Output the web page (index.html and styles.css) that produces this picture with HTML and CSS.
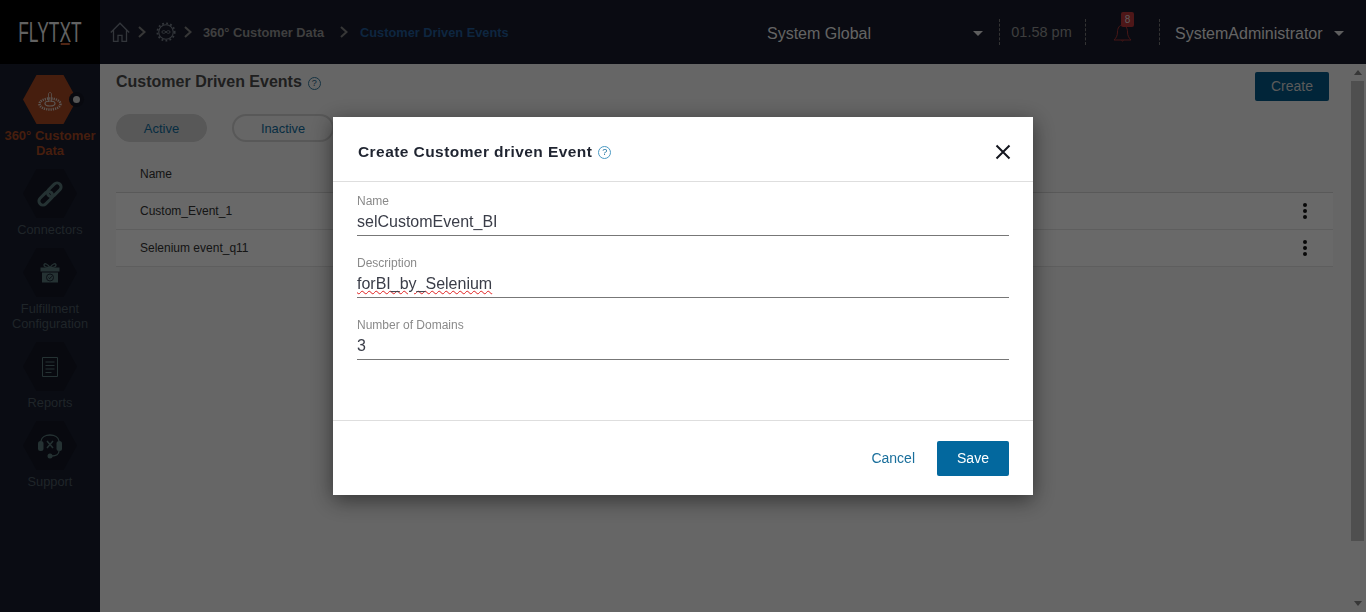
FILE: index.html
```html
<!DOCTYPE html>
<html lang="en">
<head>
<meta charset="utf-8">
<title>Customer Driven Events</title>
<link rel="stylesheet" href="styles.css">
</head>
<body>
<div class="app">
  <header class="topbar">
    <div class="logo"><span class="logo-text">FLYT<span class="logo-x">X</span>T</span></div>
    <nav class="crumbs">
      <svg class="home" viewBox="0 0 20 20"><path d="M.8 10.500 10 1.200l9.200 9.300M3.500 8.200V19.300h4.500v-6h4v6h4.500V8.200" fill="none" stroke="currentColor" stroke-width="1.300"/></svg>
      <svg class="chev" viewBox="0 0 8 12"><path d="M1 1l5.500 5-5.500 5" fill="none" stroke="currentColor" stroke-width="2"/></svg>
      <svg class="gear" viewBox="0 0 22 22"><circle cx="11" cy="11" r="8" fill="none" stroke="currentColor" stroke-width="1.200"/><circle cx="11" cy="11" r="9.500" fill="none" stroke="currentColor" stroke-width="2" stroke-dasharray="2 2.470"/><path d="M11 11c-1.500-2-4.500-2-4.500 0s3 2 4.500 0 4.500-2 4.500 0-3 2-4.500 0z" fill="none" stroke="currentColor"/></svg>
      <svg class="chev" viewBox="0 0 8 12"><path d="M1 1l5.500 5-5.500 5" fill="none" stroke="currentColor" stroke-width="2"/></svg>
      <span class="crumb">360° Customer Data</span>
      <svg class="chev chev-wide" viewBox="0 0 8 12"><path d="M1 1l5.500 5-5.500 5" fill="none" stroke="currentColor" stroke-width="2"/></svg>
      <span class="crumb crumb-active">Customer Driven Events</span>
    </nav>
    <div class="tenant"><span class="top-text">System Global</span><i class="caret"></i></div>
    <div class="time">01.58 pm</div>
    <div class="bell">
      <svg viewBox="0 0 19 20"><path d="M1 17c2-2 3.500-4 3.500-8 0-4 2-7 5-7s5 3 5 7c0 4 1.500 6 3.500 8zM8.500 17.500a1.300 1.300 0 0 0 2 0" fill="none" stroke="currentColor" stroke-width="1"/></svg>
      <span class="badge">8</span>
    </div>
    <div class="user"><span class="top-text">SystemAdministrator</span><i class="caret"></i></div>
  </header>
  <div class="body">
    <aside class="sidebar">
      <div class="side-item side-item-active">
        <div class="hex hex-active">
          <svg class="side-icon" viewBox="0 0 26 26"><g fill="none" stroke="#b8aca6"><ellipse cx="13" cy="17" rx="10.500" ry="5.500" stroke-width="2.500" stroke-dasharray="1.200 1"/><ellipse cx="13" cy="16.500" rx="5" ry="2.500" stroke-width="1.200"/><path d="M11.500 15V7c0-2 3-2 3 0v8" stroke-width=".8"/></g></svg>
          <span class="hex-dot"></span>
        </div>
        <div class="side-label">360° Customer Data</div>
      </div>
      <div class="side-item">
        <div class="hex">
          <svg class="side-icon" viewBox="0 0 26 26"><g transform="rotate(-45 13 13)" fill="none" stroke="#4a6466" stroke-width="3"><rect x="-1" y="9" width="16" height="8" rx="4"/><rect x="11" y="9" width="16" height="8" rx="4"/></g></svg>
        </div>
        <div class="side-label">Connectors</div>
      </div>
      <div class="side-item">
        <div class="hex">
          <svg class="side-icon" viewBox="0 0 26 26"><path d="M3.500 7.500h19v4h-19zM5 12.500h16v10H5z" fill="#4a6466"/><path d="M13 7.500C11 4 7 2.500 7 5s3.500 2.500 6 2.500 6 0 6-2.500-4-1-6 2.500z" fill="none" stroke="#4a6466" stroke-width="1.300"/><circle cx="13" cy="17.500" r="3.500" fill="none" stroke="#141826" stroke-width=".9"/><path d="M11.500 17.500l1.200 1.200 2-2.400" fill="none" stroke="#141826" stroke-width=".9"/></svg>
        </div>
        <div class="side-label">Fulfillment Configuration</div>
      </div>
      <div class="side-item">
        <div class="hex">
          <svg class="side-icon" viewBox="0 0 26 26"><path d="M5.500 3.500h15v19h-15zM8.500 8h9M8.500 11.500h9M8.500 15h9M8.500 18.500h6" fill="none" stroke="#4a6466"/></svg>
        </div>
        <div class="side-label">Reports</div>
      </div>
      <div class="side-item">
        <div class="hex">
          <svg class="side-icon" viewBox="0 0 26 26"><rect x="1" y="8" width="5.500" height="10" rx="2.500" fill="#4a6466"/><rect x="19.500" y="8" width="5.500" height="10" rx="2.500" fill="#4a6466"/><path d="M4 8C5 0 21 0 22 8M22 18c0 3-3 5-7 5" fill="none" stroke="#4a6466" stroke-width="1.300"/><circle cx="13" cy="23" r="2.500" fill="#4a6466"/><path d="M10 8l6 7M16 8l-6 7" stroke="#4a6466" stroke-width="1.500"/></svg>
        </div>
        <div class="side-label">Support</div>
      </div>
    </aside>
    <main class="main">
      <div class="title-row">
        <h1 class="page-title">Customer Driven Events</h1>
        <span class="help help-dim">?</span>
        <button class="create">Create</button>
      </div>
      <div class="tabs">
        <button class="tab tab-active">Active</button>
        <button class="tab">Inactive</button>
      </div>
      <div class="thead">Name</div>
      <div class="rows">
        <div class="row"><span>Custom_Event_1</span><span class="dots"><i></i><i></i><i></i></span></div>
        <div class="row"><span>Selenium event_q11</span><span class="dots"><i></i><i></i><i></i></span></div>
      </div>
    </main>
    <div class="scrollbar"><i class="arrow-up"></i><div class="thumb"></div><i class="arrow-down"></i></div>
  </div>
</div>
<div class="backdrop"></div>
<section class="modal">
  <div class="modal-head">
    <h2 class="modal-title">Create Customer driven Event</h2>
    <span class="help">?</span>
    <svg class="close" viewBox="0 0 16 16"><path d="M1.500 1.500l13 13M14.500 1.500l-13 13" stroke="#14161f" stroke-width="2" fill="none"/></svg>
  </div>
  <div class="modal-body">
    <div class="field"><label class="field-label">Name</label><div class="field-value">selCustomEvent_BI</div></div>
    <div class="field"><label class="field-label">Description</label><div class="field-value"><span class="spell">forBI_by_Selenium</span></div></div>
    <div class="field"><label class="field-label">Number of Domains</label><div class="field-value">3</div></div>
  </div>
  <div class="modal-foot">
    <button class="cancel">Cancel</button>
    <button class="save">Save</button>
  </div>
</section>
</body>
</html>
```

FILE: styles.css
```css
* { box-sizing: border-box; }
html, body { margin: 0; height: 612px; overflow: hidden; }
body { font-family: "Liberation Sans", Arial, sans-serif; background: #ccc; color: #333; }
button { font-family: inherit; }
.app { display: flex; flex-direction: column; height: 612px; }

.topbar { display: flex; align-items: center; height: 64px; background: #141724; flex: none; }
.logo { display: flex; align-items: center; justify-content: center; width: 100px; height: 64px; background: #000; flex: none; }
.logo-text { display: inline-block; transform: scaleX(.6); color: #c4c4c4; font-size: 29px; line-height: 1; white-space: nowrap; }
.logo-x { position: relative; }
.logo-x::after { content: ""; position: absolute; left: 2px; right: 2px; bottom: 3px; height: 2px; background: #a04a28; }
.crumbs { display: flex; align-items: center; width: 640px; padding-left: 10px; color: #6e6e6e; flex: none; }
.home { width: 20px; height: 20px; margin-right: 8px; color: #666c76; }
.gear { width: 20px; height: 20px; margin-right: 8px; color: #666c76; }
.chev { width: 8px; height: 12px; margin-right: 10px; }
.chev-wide { margin: 0 12px 0 16px; }
.crumb { font-size: 12.800px; font-weight: 700; color: #7e7e7e; margin-left: 1px; }
.crumb-active { color: #1c4c80; margin-left: 0; }
.tenant { display: flex; align-items: center; width: 243px; padding-left: 27px; font-size: 16px; color: #c8c8c8; flex: none; margin-right: 16px; }
.tenant span { flex: 1; }
.top-text { padding-top: 3px; }
.caret { display: block; width: 0; height: 0; border: 5px solid transparent; border-top: 5px solid #bcbcbc; border-bottom: 0; margin-top: 3px; }
.time { width: 87px; height: 26px; padding-right: 2px; border-left: 1px dashed #666; border-right: 1px dashed #666; font-size: 14.500px; line-height: 26px; text-align: center; color: #7c7c7c; flex: none; }
.bell { position: relative; width: 73px; height: 26px; color: #8e2c2c; flex: none; display: flex; justify-content: center; }
.bell svg { width: 19px; height: 20px; margin-top: 4px; }
.badge { position: absolute; left: 35px; top: -7px; width: 13px; height: 15px; background: #9c2e30; border-radius: 2px; color: #bbb; font-size: 10px; line-height: 15px; text-align: center; }
.user { display: flex; align-items: center; height: 26px; border-left: 1px dashed #666; padding-left: 15px; font-size: 16px; color: #c8c8c8; flex: none; }
.user .top-text { margin-right: 11px; }

.body { display: flex; flex: 1; min-height: 0; }
.sidebar { width: 100px; background: #141826; flex: none; padding-top: 11px; }
.side-item { display: flex; flex-direction: column; align-items: center; margin-bottom: 11px; }
.hex { position: relative; width: 54px; height: 49px; display: flex; align-items: center; justify-content: center; }
.hex::before { content: ""; position: absolute; inset: 0; background: #10131e; clip-path: polygon(25% 0, 75% 0, 100% 50%, 75% 100%, 25% 100%, 0 50%); }
.hex-active::before { background: #8c3c1c; }
.side-icon { position: relative; width: 26px; height: 26px; }
.hex-dot { position: absolute; right: -3px; top: 21px; width: 7px; height: 7px; border-radius: 50%; background: #aaa; box-shadow: 0 0 0 4px #10131e; }
.side-label { width: 100px; margin-top: 4px; font-size: 12.800px; line-height: 15px; text-align: center; color: #3e4a52; }
.side-item-active .side-label { color: #8c3c1c; font-weight: 700; font-size: 13px; }

.main { flex: 1; min-width: 0; padding: 0 16px; }
.title-row { display: flex; align-items: center; height: 44px; }
.page-title { margin: 0; font-size: 16px; font-weight: 700; color: #3e3e3e; position: relative; top: -4px; }
.help { display: inline-flex; align-items: center; justify-content: center; width: 13px; height: 13px; border: 1px solid #4a9ac4; border-radius: 50%; color: #1a6f9c; font-size: 9px; line-height: 1; margin-left: 6px; flex: none; }
.help-dim { position: relative; top: -3px; border-color: #2c6684; color: #124c6c; }
.create { margin-left: auto; margin-right: 4px; width: 74px; height: 29px; background: #024a72; border: 0; border-radius: 2px; color: #b4b4b4; font-size: 14px; }
.tabs { display: flex; gap: 25px; margin-top: 6px; }
.tab { width: 91px; height: 28px; padding: 0; border: 2px solid #b0b0b0; border-radius: 14px; background: #ccc; color: #0e5a84; font-size: 13px; }
.tab:nth-child(2) { width: 102px; font-size: 12.800px; }
.tab-active { background: #b0b0b0; border-width: 1px; }
.thead { height: 51px; padding: 14px 0 0 24px; font-size: 12px; color: #2a2a2a; display: flex; align-items: center; border-bottom: 1px solid #b2b2b2; }
.rows { background: #d2d2d2; }
.row { display: flex; justify-content: space-between; align-items: center; height: 37px; padding: 0 24px; border-bottom: 1px solid #bcbcbc; font-size: 12px; color: #2a2a2a; }
.dots { display: flex; flex-direction: column; gap: 2px; margin-right: 2px; }
.dots i { width: 4px; height: 4px; border-radius: 50%; background: #111; }

.scrollbar { width: 17px; flex: none; display: flex; flex-direction: column; align-items: center; }
.arrow-up { width: 0; height: 0; margin: 6px 0 6px; border: 4px solid transparent; border-top: 0; border-bottom: 5px solid #6e6e6e; }
.arrow-down { width: 0; height: 0; margin: auto 0 6px; border: 4px solid transparent; border-bottom: 0; border-top: 5px solid #6e6e6e; }
.thumb { width: 13px; height: 460px; background: #9e9e9e; }

.backdrop { position: fixed; inset: 0; z-index: 10; background: rgba(0, 0, 0, .5); }
.modal { position: fixed; z-index: 11; left: 333px; top: 117px; width: 700px; height: 378px; background: #fff; box-shadow: 0 5px 20px rgba(0, 0, 0, .5); display: flex; flex-direction: column; }
.modal-head { display: flex; align-items: center; height: 65px; padding: 5px 22px 0 25px; border-bottom: 1px solid #dedede; flex: none; }
.modal-title { margin: 0; font-size: 15.500px; font-weight: 700; letter-spacing: .43px; color: #1f2430; }
.modal-head .help { margin-left: 6px; position: relative; top: 1px; }
.close { width: 16px; height: 16px; margin-left: auto; }
.modal-body { flex: 1; padding: 12px 24px 0; }
.field { height: 62px; }
.field-label { display: block; font-size: 12px; line-height: 14px; color: #8a8a8a; }
.field-value { height: 28px; padding-top: 4px; border-bottom: 1px solid #777; font-size: 16px; line-height: 20px; color: #3a3d48; }
.spell { text-decoration: underline wavy #e02020 1px; text-underline-offset: 1px; }
.modal-foot { display: flex; align-items: center; justify-content: flex-end; height: 75px; padding: 0 24px 0 0; border-top: 1px solid #dedede; flex: none; }
.cancel { border: 0; background: none; padding: 0; margin-right: 22px; color: #1a6f9c; font-size: 14px; }
.save { width: 72px; height: 35px; border: 0; border-radius: 2px; background: #03689e; color: #fff; font-size: 14px; }
```
